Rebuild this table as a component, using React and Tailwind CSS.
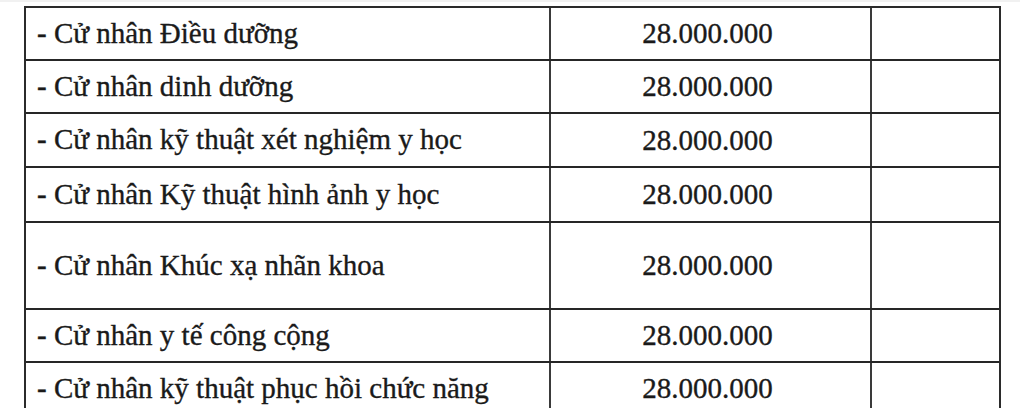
import React from 'react';

const rows = [
  { name: '- Cử nhân Điều dưỡng', fee: '28.000.000', h: 'h-[53px]' },
  { name: '- Cử nhân dinh dưỡng', fee: '28.000.000', h: 'h-[53px]' },
  { name: '- Cử nhân kỹ thuật xét nghiệm y học', fee: '28.000.000', h: 'h-[54px]' },
  { name: '- Cử nhân Kỹ thuật hình ảnh y học', fee: '28.000.000', h: 'h-[55px]' },
  { name: '- Cử nhân Khúc xạ nhãn khoa', fee: '28.000.000', h: 'h-[87px]' },
  { name: '- Cử nhân y tế công cộng', fee: '28.000.000', h: 'h-[53px]' },
  { name: '- Cử nhân kỹ thuật phục hồi chức năng', fee: '28.000.000', h: 'h-[53px]' },
];

const App = () => {
  return (
    <div
      className="w-[1020px] h-[408px] overflow-hidden bg-white text-[#1a1a1a] [-webkit-text-stroke:0.35px_#1a1a1a]"
      style={{ fontFamily: '"Liberation Serif", "Times New Roman", serif' }}
    >
      <div className="h-[2px] w-full bg-[#f1f1f1]" />
      <div className="flex pt-[4px]">
        {/* leftmost column, cut off */}
        <div className="w-[24px] shrink-0" />

        <div className="w-[977px] shrink-0 border-t-2 border-l-2 border-r-2 border-[#2b2b2b]">
          {rows.map((row, i) => (
            <div key={i} className={`flex ${row.h} border-b-2 border-[#262626]`}>
              <div className="w-[525px] shrink-0 flex items-center pl-[11px] pb-[1px] border-r-2 border-[#3a3a3a] text-[29px] leading-none">
                {row.name}
              </div>
              <div className="w-[321px] shrink-0 flex items-center justify-center pr-[6px] border-r-2 border-[#3a3a3a] text-[29px] leading-none">
                {row.fee}
              </div>
              <div className="flex-1" />
            </div>
          ))}
        </div>
      </div>
    </div>
  );
};

export default App;
